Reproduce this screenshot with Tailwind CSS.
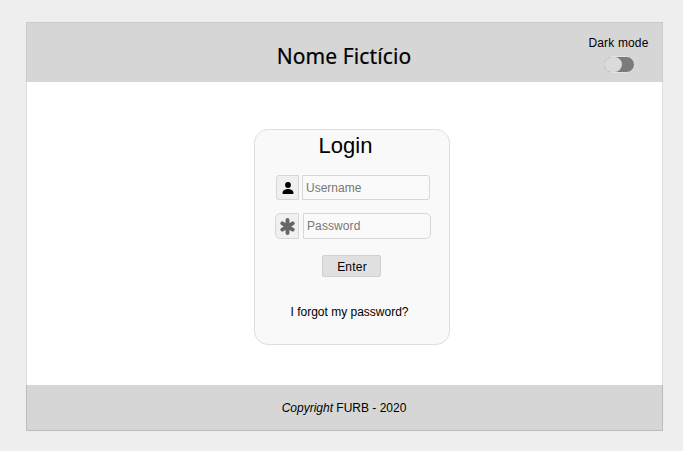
<!DOCTYPE html>
<html lang="en">
<head>
<meta charset="utf-8">
<title>Login</title>
<script src="https://cdn.jsdelivr.net/npm/@tailwindcss/browser@4"></script>
</head>
<body class="h-[451px] w-[683px] overflow-hidden bg-[#eeeeee] pt-[22px] pl-[26px] font-['Liberation_Sans',sans-serif] text-[12px] leading-[14px] text-black">
<div class="flex h-[409px] w-[637px] flex-col bg-white">
  <header class="relative flex h-[60px] shrink-0 justify-center border border-b-0 border-[#cacaca] bg-[#d6d6d6] pt-[19px]">
    <h1 class="pr-[1px] font-['Noto_Sans',sans-serif] text-[21px] leading-[29px] tracking-[0.1px] whitespace-nowrap [-webkit-text-stroke:0.2px_black]">Nome Fictício</h1>
    <div class="absolute top-[13px] right-[13px] flex w-[61px] flex-col items-center">
      <span class="tracking-[0.15px] whitespace-nowrap">Dark mode</span>
      <span class="mt-[6px] flex h-[17px] w-[32px] rounded-full border border-[#e3e3e3] bg-[#7b7b7b]"><span class="h-[15px] w-[18px] rounded-full bg-[#dadada]"></span></span>
    </div>
  </header>
  <main class="flex h-[303px] shrink-0 justify-center border-x border-[#dedede] pt-[47px] pl-[15px]">
    <form class="flex h-[216px] w-[196px] flex-col items-center rounded-[14px] border border-[#dfdfdf] bg-[#f9f9f9]">
      <h2 class="mt-[3px] mr-[13px] text-[22px] leading-[26px]">Login</h2>
      <div class="mt-[16px] ml-[2px] flex h-[25px] w-[154px] gap-[3px]">
        <span class="flex w-[23px] items-center justify-center rounded-l-[3px] border border-[#d6d6d6] bg-[#f0f0f0]">
          <svg class="h-[12px] w-[12px]" viewBox="0 0 12 12"><circle cx="6" cy="3" r="2.900"/><path d="M.6 12v-1.400C.6 8.300 3.500 7.100 6 7.100s5.400 1.200 5.400 3.500V12z"/></svg>
        </span>
        <span class="w-[128px] rounded-r-[3px] border border-[#d6d6d6] bg-[#fafafa] pt-[5px] pl-[3px] text-[#777777]">Username</span>
      </div>
      <div class="mt-[13px] ml-[2px] flex h-[26px] w-[156px] gap-[4px]">
        <span class="flex w-[24px] items-center justify-center rounded-l-[5px] border border-[#d6d6d6] bg-[#f0f0f0]">
          <svg class="ml-[1px] h-[17px] w-[15px]" viewBox="0 0 15 17" fill="none" stroke="#666666" stroke-width="3.900" stroke-linecap="round"><path d="M7.500 2v13M2.300 5.400l10.400 6.200M12.700 5.400L2.300 11.600"/></svg>
        </span>
        <span class="w-[128px] rounded-r-[5px] border border-[#d6d6d6] bg-[#fafafa] pt-[5px] pl-[3px] tracking-[0.1px] text-[#777777]">Password</span>
      </div>
      <button type="button" class="mt-[16px] mr-[2px] flex h-[22px] w-[59px] justify-center rounded-[2px] border border-[#d0d0d0] bg-[#e0e0e0] pt-[4px] pl-[2px] tracking-[0.2px]">Enter</button>
      <a class="mt-[28px] mr-[5px] whitespace-nowrap">I forgot my password?</a>
    </form>
  </main>
  <footer class="flex h-[46px] shrink-0 justify-center border border-t-0 border-[#bcbcbc] bg-[#d6d6d6] pt-[16px] pr-[1px]">
    <p class="whitespace-nowrap"><i>Copyright</i> FURB - 2020</p>
  </footer>
</div>
</body>
</html>
